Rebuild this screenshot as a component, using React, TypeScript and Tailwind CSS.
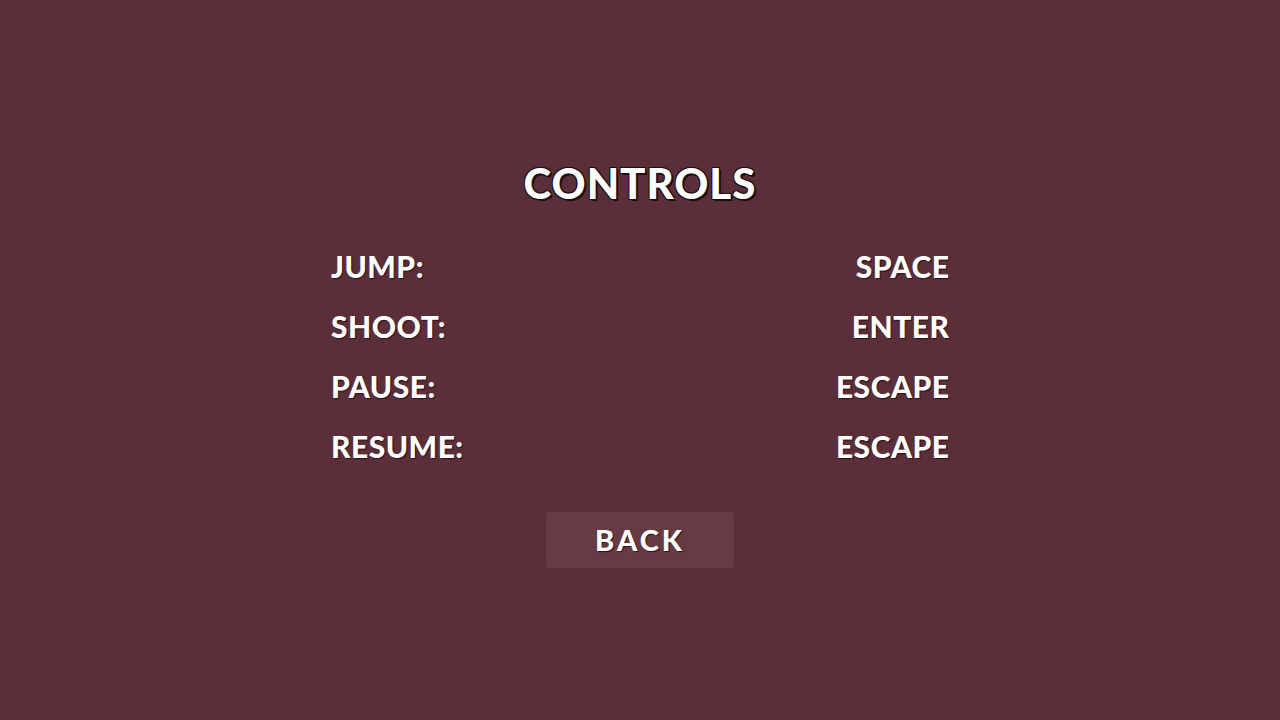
import React from "react";

const bindings = [
  { action: "JUMP:", key: "SPACE" },
  { action: "SHOOT:", key: "ENTER" },
  { action: "PAUSE:", key: "ESCAPE" },
  { action: "RESUME:", key: "ESCAPE" },
];

const App = () => {
  return (
    <div className="flex h-[720px] w-[1280px] flex-col items-center bg-[#5b2f39] font-['Lato',sans-serif] text-white">
      <h1 className="mt-[160px] text-[42px] font-black leading-[46px] tracking-[1px] [text-shadow:1px_1px_0_#1e0d10,-1px_-1px_0_#1e0d10,1px_-1px_0_#1e0d10,-1px_1px_0_#1e0d10,2px_2px_0_#1e0d10]">
        CONTROLS
      </h1>

      <div className="mt-[30px] flex w-[618px] flex-col">
        {bindings.map((b) => (
          <div
            key={b.action}
            className="flex h-[60px] items-center justify-between text-[30px] font-black [text-shadow:1px_1px_1px_#2a1015]"
          >
            <span className="tracking-[0.5px]">{b.action}</span>
            <span className="-mr-[0.5px] tracking-[0.5px]">{b.key}</span>
          </div>
        ))}
      </div>

      <button className="mt-[36px] flex h-[56px] w-[188px] items-center justify-center rounded-[3px] bg-[#673b44] text-[29px] font-black tracking-[3px] [text-shadow:1px_1px_1px_#2a1015]">
        BACK
      </button>
    </div>
  );
};

export default App;
